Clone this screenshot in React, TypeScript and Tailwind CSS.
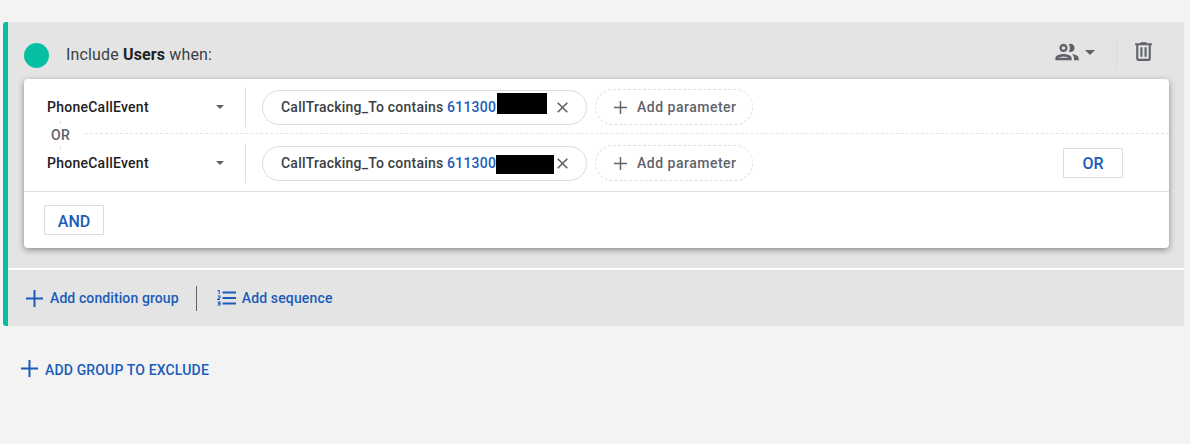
import React from "react";

const Caret = ({ w = 10, h = 5, className = "" }: { w?: number; h?: number; className?: string }) => (
  <svg width={w} height={h} viewBox="0 0 10 5" preserveAspectRatio="none" className={className}><path d="M0 0h10L5 5z" fill="#5f6368" /></svg>
);

const Plus = ({ size, color, sw, className = "" }: { size: number; color: string; sw: number; className?: string }) => (
  <svg width={size} height={size} viewBox={`0 0 ${size} ${size}`} className={`shrink-0 ${className}`}>
    <path d={`M${size / 2} 0V${size}M0 ${size / 2}H${size}`} stroke={color} strokeWidth={sw} fill="none" />
  </svg>
);

function Row({ redactW, redactH, redactGap, shift }: { redactW: number; redactH: number; redactGap: number; shift: number }) {
  return (
    <div className="flex h-[56px] items-center">
      <div className="flex w-[222px] shrink-0 items-center pl-[23px] pr-[21px] justify-between border-r border-[#e0e0e0] h-[40px]">
        <span className="text-[14px] font-medium tracking-[0.25px] text-[#202124]">PhoneCallEvent</span>
        <Caret w={8} h={4} />
      </div>
      <div className="ml-[16px] flex h-[35px] w-[325px] items-center rounded-full border border-[#dadce0] pl-[18px] relative">
        <span className="text-[14px] font-medium tracking-[0.22px] text-[#3c4043] whitespace-nowrap">
          CallTracking_To contains <span className="text-[#1a5cba]">611300</span>
        </span>
        <span className="bg-black shrink-0" style={{ width: redactW, height: redactH, marginLeft: redactGap, marginTop: shift * 2 }} />
        <svg width="11" height="11" viewBox="0 0 11 11" className="absolute left-[294px] top-[11px]">
          <path d="M0.7 0.7l9.6 9.6M10.3 0.7L0.7 10.3" stroke="#5f6368" strokeWidth="1.6" fill="none" />
        </svg>
      </div>
      <div className="ml-[8px] flex h-[36px] w-[158px] items-center rounded-full border border-dashed border-[#dedfe2] pl-[18px]">
        <Plus size={13} color="#5f6368" sw={1.5} />
        <span className="ml-[10px] text-[14px] font-medium tracking-[0.5px] text-[#5f6368] whitespace-nowrap">Add parameter</span>
      </div>
    </div>
  );
}

export default function App() {
  return (
    <div className="h-[444px] w-[1190px] overflow-hidden bg-[#f3f3f3] pt-[22px] pl-[3px] font-['Roboto',sans-serif]">
      <div className="w-[1181px] h-[304px] rounded-[3px] border-l-[5px] border-[#06bfa2] bg-[#e4e4e4] flex flex-col">
        <div className="flex h-[57px] items-center pl-[16px] pr-[28px]">
          <div className="h-[25px] w-[25px] rounded-full bg-[#06bfa2] mt-[9px]" />
          <div className="ml-[17px] text-[16px] tracking-[0.15px] text-[#3c4043] mt-[8px]">
            Include <b className="font-bold text-[#202124]">Users</b> when:
          </div>
          <div className="ml-auto flex items-start self-start pt-[17px]">
            <svg width="28" height="28" viewBox="0 0 24 24" className="-mt-[1px]">
              <path fill="#5f6368" d="M9 13.75c-2.34 0-7 1.17-7 3.5V19h14v-1.75c0-2.33-4.66-3.5-7-3.5zM4.34 17c.84-.58 2.87-1.25 4.66-1.25s3.82.67 4.66 1.25H4.34zM9 12c1.93 0 3.5-1.57 3.5-3.5S10.93 5 9 5 5.5 6.57 5.5 8.5 7.07 12 9 12zm0-5c.83 0 1.5.67 1.5 1.5S9.83 10 9 10s-1.5-.67-1.5-1.5S8.17 7 9 7zm7.04 6.81c1.16.84 1.96 1.96 1.96 3.44V19h4v-1.75c0-2.02-3.5-3.17-5.96-3.44zM15 12c1.93 0 3.5-1.57 3.5-3.5S16.93 5 15 5c-.54 0-1.04.13-1.5.35.63.89 1 1.98 1 3.15s-.37 2.26-1 3.15c.46.22.96.35 1.5.35z" />
            </svg>
            <Caret className="ml-[4px] mt-[11px]" />
            <div className="ml-[21px] h-[30px] w-px bg-[#d9d9dd]" />
            <svg width="25" height="25" viewBox="0 0 24 24" className="ml-[14px]">
              <path fill="#5f6368" d="M15 4V3H9v1H4v2h1v13c0 1.1.9 2 2 2h10c1.1 0 2-.9 2-2V6h1V4h-5zm2 15H7V6h10v13zM9 8h2v9H9zm4 0h2v9h-2z" />
            </svg>
          </div>
        </div>
        <div className="relative ml-[16px] w-[1145px] h-[169px] rounded-[4px] bg-white shadow-[0_2px_6px_rgba(0,0,0,0.4)] flex flex-col">
          <Row redactW={50} redactH={21} redactGap={1} shift={-3.5} />
          <Row redactW={58} redactH={19} redactGap={0} shift={1.5} />
          <div className="absolute left-[61px] right-0 top-[54px] border-t border-dashed border-[#e4e5e8]" />
          <div className="absolute left-[36px] top-[42px] h-[28px] border-l border-dashed border-[#dadce0]" />
          <span className="absolute left-[27px] top-[47px] bg-white text-[14px] font-medium tracking-[0.25px] text-[#5f6368] leading-[18px]">OR</span>
          <button className="absolute right-[46px] top-[69px] flex h-[30px] w-[60px] items-center justify-center border border-[#dadce0] rounded-[1px] pt-[1px] text-[16px] font-medium text-[#1a5cba]">OR</button>
          <div className="border-t border-[#e0e0e0] h-[57px] flex items-start pl-[20px] pt-[13px]">
            <button className="flex h-[30px] w-[60px] items-center justify-center border border-[#dadce0] rounded-[1px] pt-[3px] text-[16px] font-medium text-[#1a5cba]">AND</button>
          </div>
        </div>
        <div className="mt-[20px] h-[2px] bg-white" />
        <div className="flex h-[56px] items-center pl-[18px]">
          <Plus size={17} color="#1a5cba" sw={2} />
          <span className="ml-[7px] text-[14px] font-medium tracking-[0.1px] text-[#1a5cba] whitespace-nowrap">Add condition group</span>
          <div className="ml-[17px] h-[25px] w-px bg-[#5f6368]" />
          <svg width="19" height="16" viewBox="0 0 19 16" className="ml-[20px]">
            <path d="M5.5 2.5H19M5.5 8H19M5.5 13.5H19" stroke="#1a5cba" strokeWidth="2" fill="none" />
            <path d="M0.5 0.5H2.2V4M0.5 6H3V7.5L0.5 9.5H3M0.5 12H3V15H0.5M1 13.5H3" stroke="#1a5cba" strokeWidth="1.1" fill="none" />
          </svg>
          <span className="ml-[6px] text-[14px] font-medium tracking-[0.15px] text-[#1a5cba] whitespace-nowrap">Add sequence</span>
        </div>
      </div>
      <div className="mt-[34px] ml-[18px] flex items-center">
        <Plus size={17} color="#1a5cba" sw={2} className="-mt-[3px]" />
        <span className="ml-[7px] text-[14px] font-medium tracking-[0.15px] text-[#1a5cba] leading-[20px] whitespace-nowrap">ADD GROUP TO EXCLUDE</span>
      </div>
    </div>
  );
}
